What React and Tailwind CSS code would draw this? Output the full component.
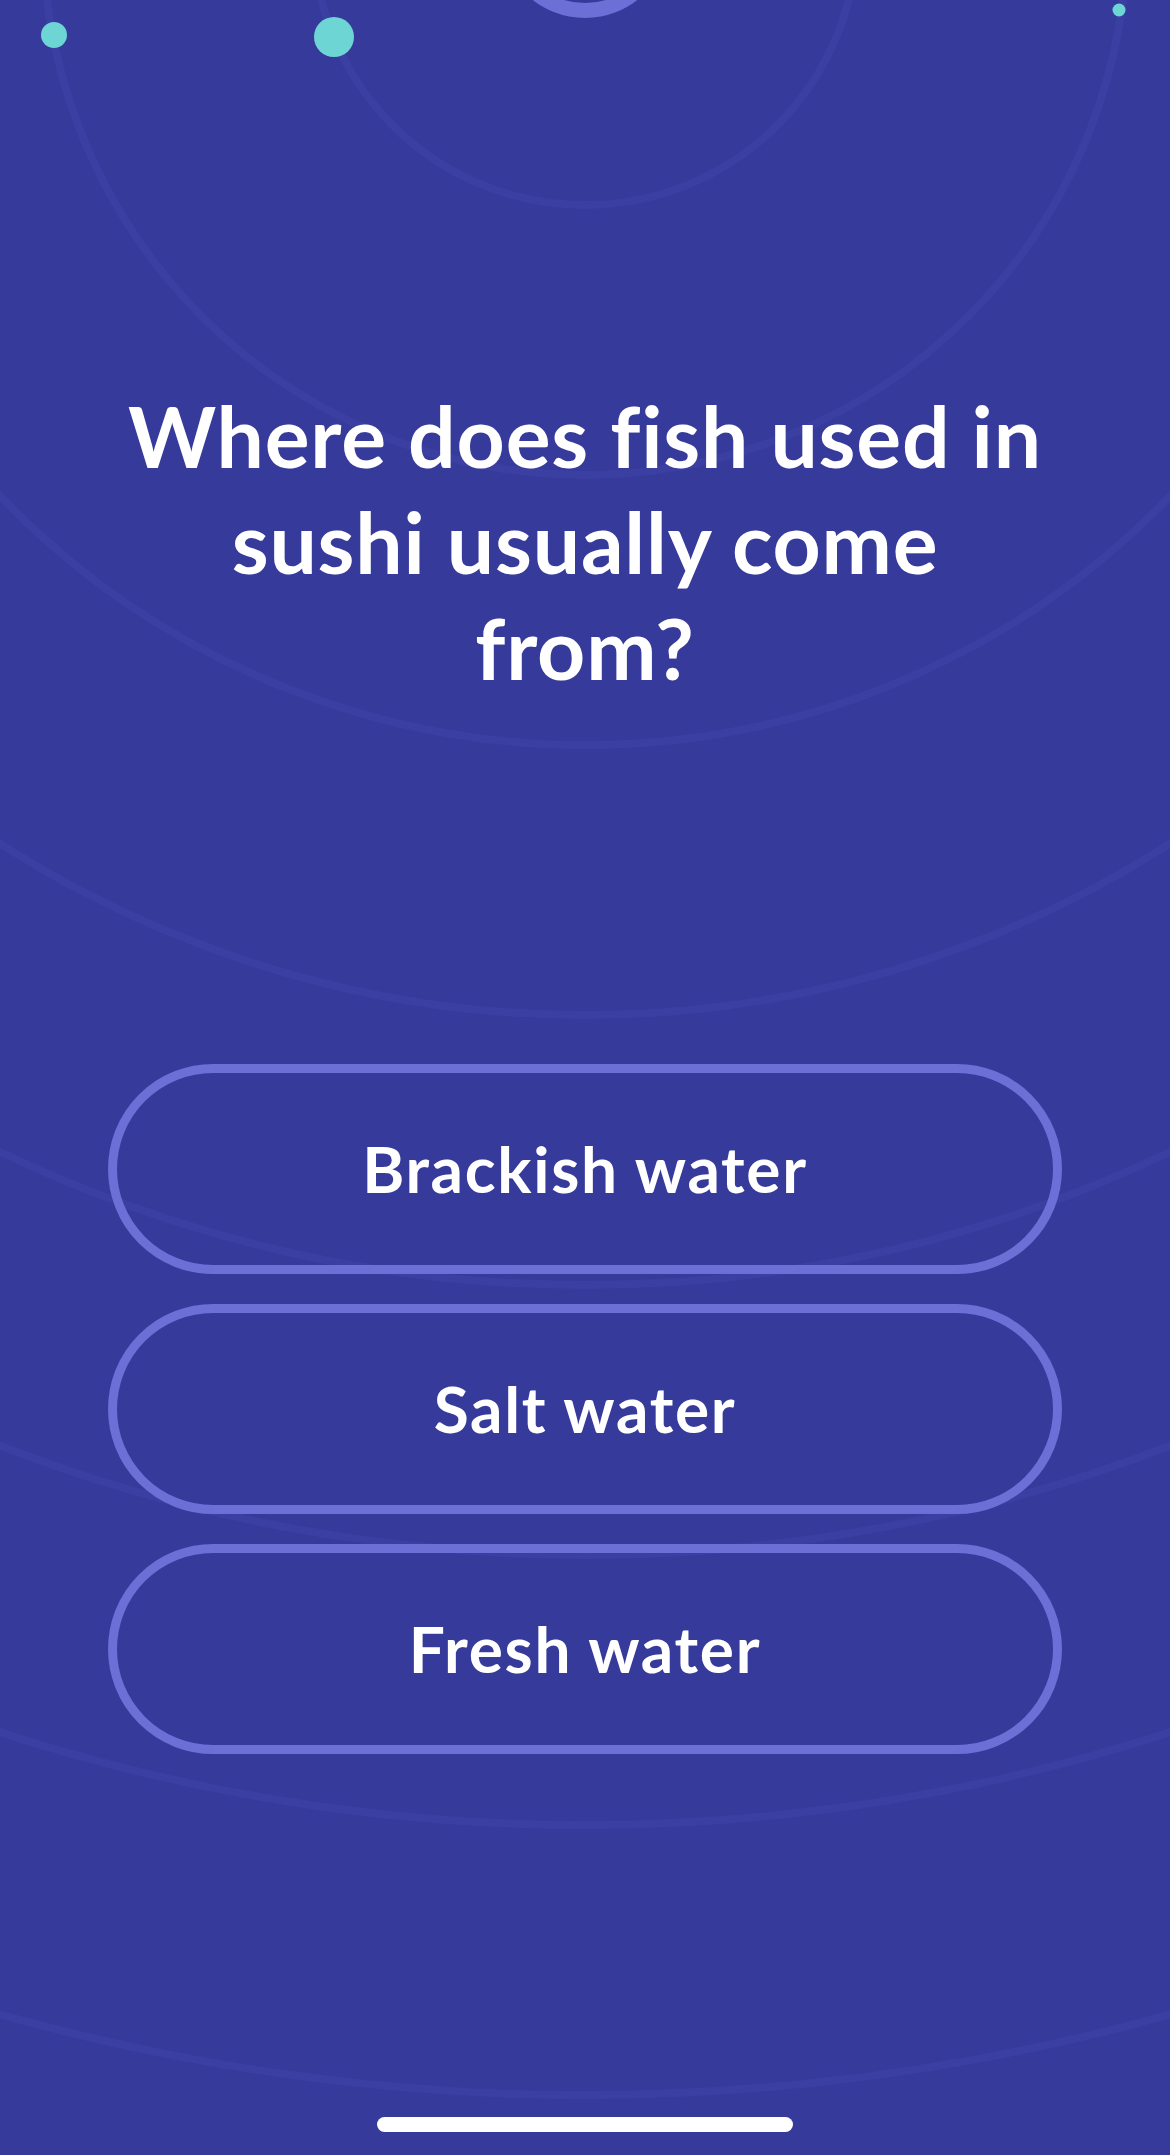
import React from 'react';

const CX = 585;
const CY = -67;
const orbits = [272, 542, 812, 1082, 1352, 1622, 1892, 2162];

const answers = ['Brackish water', 'Salt water', 'Fresh water'];

function Backdrop() {
  return (
    <svg
      className="absolute inset-0 pointer-events-none"
      width="1170"
      height="2155"
      viewBox="0 0 1170 2155"
      fill="none"
    >
      {orbits.map((r) => (
        <circle key={r} cx={CX} cy={CY} r={r} stroke="#3a3fa1" strokeWidth="8" />
      ))}
      <circle cx={CX} cy={CY} r="77.5" stroke="#6b6fd6" strokeWidth="15" />
      <circle cx="54" cy="35" r="13" fill="#6dd6d4" />
      <circle cx="334" cy="37" r="20" fill="#6dd6d4" />
      <circle cx="1119" cy="10" r="6.5" fill="#6dd6d4" />
    </svg>
  );
}

export default function App() {
  return (
    <div
      className="relative w-[1170px] h-[2155px] overflow-hidden bg-[#353a9b] text-white"
      style={{ fontFamily: 'Lato, "Open Sans", sans-serif' }}
    >
      <Backdrop />
      <div className="relative flex flex-col items-center">
        <h1 className="pt-[383px] text-center text-[84px] leading-[106px] font-bold tracking-[0.8px]">
          Where does fish used in
          <br />
          sushi usually come
          <br />
          from?
        </h1>

        <div className="mt-[363px] flex flex-col gap-[30px]">
          {answers.map((a) => (
            <button
              key={a}
              className="w-[954px] h-[210px] rounded-full border-[9px] border-[#6b6fd6] flex items-center justify-center text-[64px] font-bold tracking-[1.7px]"
            >
              {a}
            </button>
          ))}
        </div>

        <div className="mt-[363px] w-[416px] h-[15px] rounded-full bg-white" />
      </div>
    </div>
  );
}
